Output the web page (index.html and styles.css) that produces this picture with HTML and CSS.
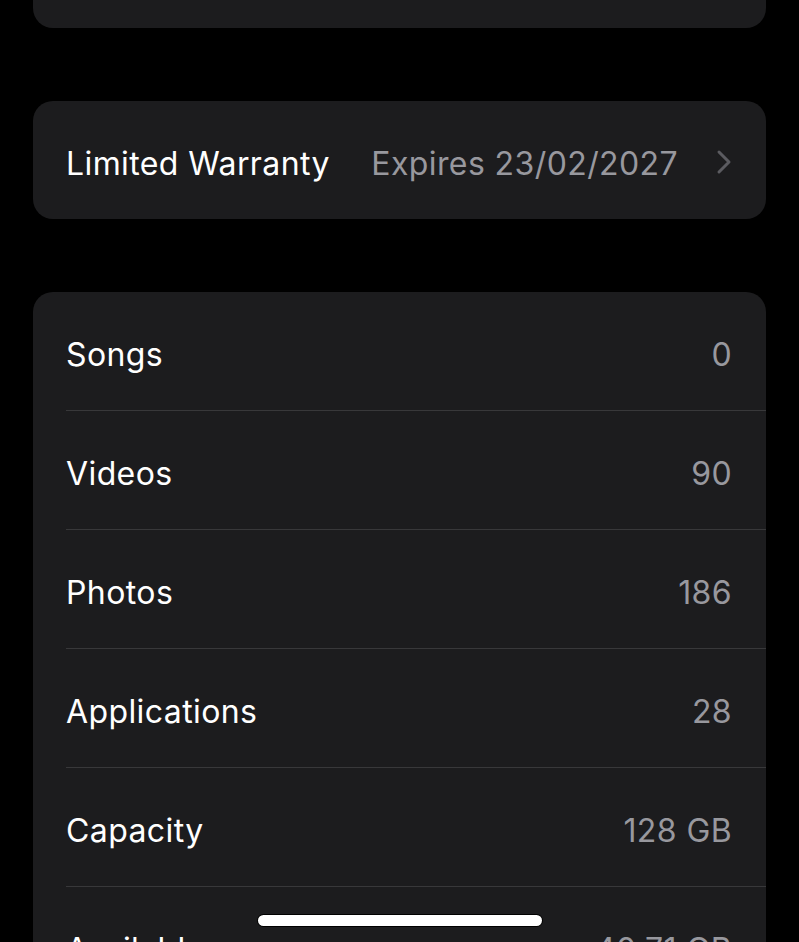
FILE: index.html
```html
<!DOCTYPE html>
<html lang="en">
<head>
    <meta charset="UTF-8">
    <meta name="viewport" content="width=device-width, initial-scale=1.0">
    <title>About</title>
    <link rel="stylesheet" href="styles.css">
</head>
<body>

<div class="screen">
    <div class="card card-cut"></div>

    <div class="card">
        <div class="row row-link">
            <span class="label">Limited Warranty</span>
            <span class="value">Expires 23/02/2027</span>
            <svg class="chevron" width="16" height="26" viewBox="0 0 16 26">
                <path d="M3 3 L13 13 L3 23" fill="none" stroke="#5b5b60" stroke-width="3" stroke-linecap="round" stroke-linejoin="round"/>
            </svg>
        </div>
    </div>

    <div class="card">
        <div class="row">
            <span class="label">Songs</span>
            <span class="value">0</span>
        </div>
        <div class="row">
            <span class="label">Videos</span>
            <span class="value">90</span>
        </div>
        <div class="row">
            <span class="label">Photos</span>
            <span class="value">186</span>
        </div>
        <div class="row">
            <span class="label">Applications</span>
            <span class="value">28</span>
        </div>
        <div class="row">
            <span class="label">Capacity</span>
            <span class="value">128 GB</span>
        </div>
        <div class="row">
            <span class="label">Available</span>
            <span class="value">40.71 GB</span>
        </div>
    </div>
</div>

<div class="home-bar"></div>

</body>
</html>
```

FILE: styles.css
```css
body {
    margin: 0;
    background-color: #000;
    color: #fff;
    font-family: Inter, "Noto Sans", sans-serif;
    height: 942px;
    overflow: hidden;
    position: relative;
}
.screen {
    display: flex;
    flex-direction: column;
    gap: 73px;
    padding: 0 33px;
}
.card {
    background-color: #1c1c1e;
    border-radius: 20px;
}
.card-cut {
    height: 28px;
    border-radius: 0 0 20px 20px;
}
.row {
    display: flex;
    align-items: center;
    height: 118px;
    margin-left: 33px;
    padding-right: 34px;
    border-bottom: 1px solid #38383a;
    font-size: 32px;
    letter-spacing: 0.4px;
}
.row:last-child {
    border-bottom: none;
}
.label {
    flex: 1;
    padding-top: 6px;
}
.value {
    color: #98989e;
    padding-top: 6px;
}
.chevron {
    margin-left: 38px;
    margin-top: 4px;
}
.home-bar {
    position: absolute;
    left: 258px;
    top: 915px;
    width: 284px;
    height: 11px;
    background-color: #fff;
    border-radius: 6px;
    box-shadow: 0 0 0 1px #000;
}
```
